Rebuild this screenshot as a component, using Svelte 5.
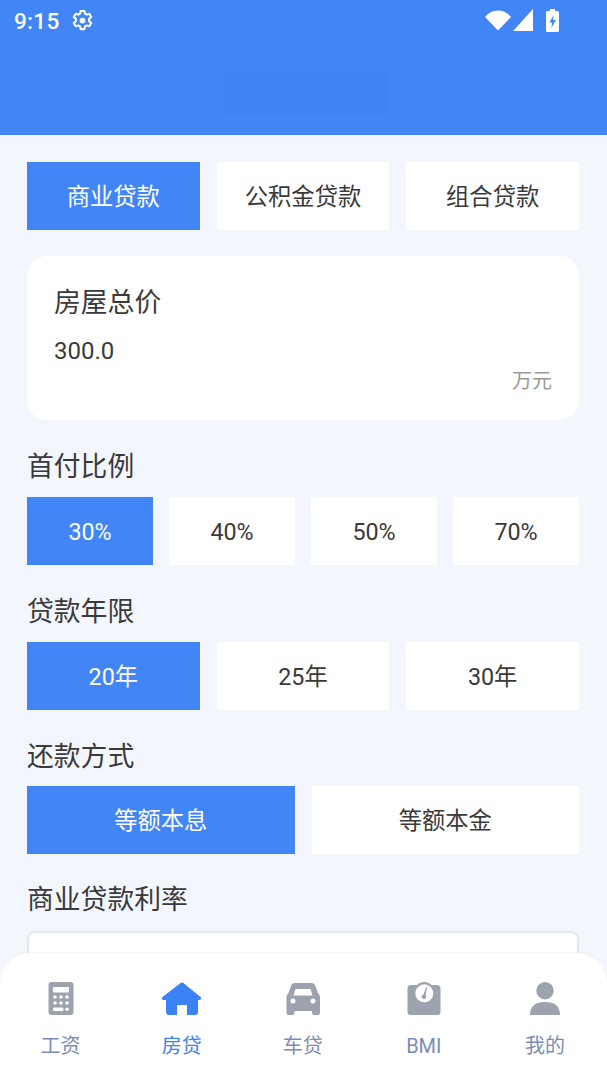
<script>
	const loanTypes = ['商业贷款', '公积金贷款', '组合贷款'];
	const ratios = ['30%', '40%', '50%', '70%'];
	const years = ['20年', '25年', '30年'];
	const methods = ['等额本息', '等额本金'];
	const tabs = ['工资', '房贷', '车贷', 'BMI', '我的'];
</script>

{#snippet options(items, cls)}
	<div class="options {cls}">
		{#each items as item, i}
			<div class="opt" class:on={i === 0}>{item}</div>
		{/each}
	</div>
{/snippet}

<div class="page">
	<header>
		<div class="status">
			<span class="time">9:15</span>
			<svg class="gear" viewBox="0 0 24 24" width="23" height="23" fill="none" stroke="#fff" stroke-width="2.1" stroke-linejoin="round">
				<path d="M10 2h4l.6 2.900 1.800 1 2.700-1 2 3.500-2.200 1.900v2.400l2.200 1.900-2 3.500-2.700-1-1.800 1-.6 2.900h-4l-.6-2.900-1.800-1-2.700 1-2-3.500 2.200-1.900v-2.400L2.900 8.400l2-3.500 2.700 1 1.800-1z" />
				<circle cx="12" cy="12" r="3" fill="#fff" stroke="none" />
			</svg>
			<span class="spacer"></span>
			<svg viewBox="0 0 26 21" width="26" height="21" fill="#fff"><path d="M0 7C3.500 2.600 8 .500 13 .500S22.500 2.600 26 7L13 20.500z" /></svg>
			<svg class="signal" viewBox="0 0 20 22" width="20" height="22" fill="#fff"><path d="M20 0v22H0z" /></svg>
			<svg class="battery" viewBox="0 0 13 23" width="13" height="23">
				<path fill="#fff" d="M4 0h5v2h2.500q1.500 0 1.500 1.500v18q0 1.500-1.500 1.500h-10Q0 23 0 21.500v-18Q0 2 1.500 2H4z" />
				<path fill="#4285f6" d="M7.600 6 3.500 13.500h2.700L5.400 19 9.800 11H7z" />
			</svg>
		</div>
		<div class="title-blur"></div>
	</header>

	<main>
		{@render options(loanTypes, 'three')}

		<section class="card">
			<div class="card-title">房屋总价</div>
			<div class="card-value">300.0</div>
			<div class="card-unit">万元</div>
		</section>

		<h2>首付比例</h2>
		{@render options(ratios, 'four')}

		<h2>贷款年限</h2>
		{@render options(years, 'three')}

		<h2 class="short">还款方式</h2>
		{@render options(methods, 'two')}

		<h2 class="last">商业贷款利率</h2>
		<div class="rate-box"></div>
	</main>

	<nav>
		{#each tabs as tab, i}
			<div class="tab" class:active={i === 1}>
				<svg viewBox="0 0 40 33" width="40" height="33">
					{#if i === 0}
						<path fill="#9ca3af" fill-rule="evenodd" d="M10.500 0h19q3 0 3 3v27q0 3-3 3h-19q-3 0-3-3V3q0-3 3-3zM13 5a1 1 0 0 0-1 1v3.500a1 1 0 0 0 1 1h14a1 1 0 0 0 1-1V6a1 1 0 0 0-1-1z" />
						<g fill="#fff">
							<circle cx="14" cy="15" r="1.800" /><circle cx="20" cy="15" r="1.800" /><circle cx="26" cy="15" r="1.800" />
							<circle cx="14" cy="21" r="1.800" /><circle cx="20" cy="21" r="1.800" /><circle cx="26" cy="21" r="1.800" />
							<rect x="12" y="25.500" width="10.500" height="3.600" rx="1.500" /><circle cx="26" cy="27.300" r="1.800" />
						</g>
					{:else if i === 1}
						<path fill="#3b82f6" d="M20 .5q1 0 2 1L38.500 15q1 1 .5 2t-1.500 1H36v12q0 3-3 3h-8V24q0-1-1-1h-8q-1 0-1 1v9H7q-3 0-3-3V18H1.500q-1 0-1.500-1t.5-2L18 1.500q1-1 2-1z" />
					{:else if i === 2}
						<path fill="#9ca3af" fill-rule="evenodd" d="M12 1h16q3.500 0 4.500 3l2.500 7q2 1.500 2 4.500V31q0 2-2 2h-4q-2 0-2-2v-2H11.500v2q0 2-2 2h-4q-2 0-2-2V15.500q0-3 2-4.500l2.500-7Q8.500 1 12 1zM12.500 7l-2 6.500h19l-2-6.500zM10 16.500a2.500 2.500 0 1 0 0 5 2.500 2.500 0 0 0 0-5zm20 0a2.500 2.500 0 1 0 0 5 2.500 2.500 0 0 0 0-5z" />
					{:else if i === 3}
						<path fill="#9ca3af" fill-rule="evenodd" d="M7 3h6C15 1 17.500 0 20.300 0S25.600 1 27.600 3H33q3.500 0 3.500 3.500V30q0 3-3 3h-27q-3 0-3-3V6.500Q3.500 3 7 3zm13.300-.7a9 9 0 1 0 0 18 9 9 0 0 0 0-18z" />
						<path fill="#9ca3af" d="M22.400 5l1.100.3-2 7.400a2.400 2.400 0 1 1-2-.5z" />
					{:else}
						<circle cx="20" cy="8.700" r="8.700" fill="#9ca3af" />
						<path fill="#9ca3af" d="M5 33q0-13 15-13t15 13z" />
					{/if}
				</svg>
				<span>{tab}</span>
			</div>
		{/each}
	</nav>
</div>

<style>
	:global(body) {
		margin: 0;
		background: #f4f6fe;
	}
	.page {
		position: relative;
		height: 1080px;
		overflow: hidden;
		background: #f4f6fe;
		font-family: Roboto, 'Noto Sans CJK SC', sans-serif;
		color: #3a3a3a;
	}
	header {
		height: 135px;
		background: #4285f6;
		display: flex;
		flex-direction: column;
		align-items: center;
	}
	.status {
		align-self: stretch;
		height: 40px;
		padding: 0 48px 0 14px;
		display: flex;
		align-items: center;
		color: #fff;
	}
	.time {
		font-size: 22.5px;
		font-weight: 500;
		letter-spacing: 0.3px;
		padding-top: 2px;
	}
	.gear {
		margin-left: 11px;
	}
	.spacer {
		flex: 1;
	}
	.signal {
		margin-left: 2px;
	}
	.battery {
		margin-left: 13px;
	}
	.title-blur {
		margin: 32px 0 0 4px;
		width: 163px;
		height: 43px;
		background: #4082f4;
	}
	main {
		padding: 27px 28px 0 27px;
	}
	.options {
		display: grid;
		height: 68px;
		column-gap: 17px;
	}
	.three {
		grid-template-columns: repeat(3, 1fr);
	}
	.four {
		grid-template-columns: repeat(4, 1fr);
		column-gap: 16px;
	}
	.two {
		grid-template-columns: repeat(2, 1fr);
	}
	.opt {
		background: #fff;
		display: flex;
		align-items: center;
		justify-content: center;
		font-size: 23.3px;
		padding-bottom: 3px;
		box-sizing: border-box;
	}
	.two .opt {
		padding-bottom: 2px;
	}
	.four .opt {
		padding: 2px 0 0;
	}
	.opt.on {
		background: #4285f6;
		color: #fff;
	}
	.card {
		margin-top: 26px;
		height: 164px;
		box-sizing: border-box;
		padding: 27px 27px 0;
		background: #fff;
		border-radius: 20px;
	}
	.card-title {
		font-size: 26.8px;
		line-height: 40px;
	}
	.card-value {
		margin-top: 12px;
		font-size: 24px;
		line-height: 32px;
	}
	.card-unit {
		margin-top: -1px;
		text-align: right;
		font-size: 20px;
		line-height: 30px;
		color: #999;
	}
	h2 {
		margin: 0;
		height: 77px;
		box-sizing: border-box;
		padding-top: 12px;
		display: flex;
		align-items: center;
		font-size: 26.8px;
		font-weight: 400;
	}
	h2.short {
		height: 76px;
	}
	h2.last {
		padding-top: 10px;
	}
	.rate-box {
		height: 60px;
		background: #fff;
		border: 2px solid #e6e7ee;
		border-radius: 8px;
		box-sizing: border-box;
	}
	nav {
		position: absolute;
		left: 0;
		right: 0;
		bottom: 0;
		height: 127px;
		box-sizing: border-box;
		display: grid;
		grid-template-columns: repeat(5, 1fr);
		padding: 29px 1.5px 0 0;
		background: #fff;
		border-radius: 30px 30px 0 0;
		box-shadow: 0 -1px 1px rgba(0, 0, 0, 0.03);
	}
	.tab {
		display: flex;
		flex-direction: column;
		align-items: center;
		color: #7c8db5;
	}
	.tab svg {
		display: block;
	}
	.tab span {
		margin-top: 15px;
		font-size: 20px;
		line-height: 32px;
	}
	.tab.active {
		color: #3b82f6;
	}
</style>
